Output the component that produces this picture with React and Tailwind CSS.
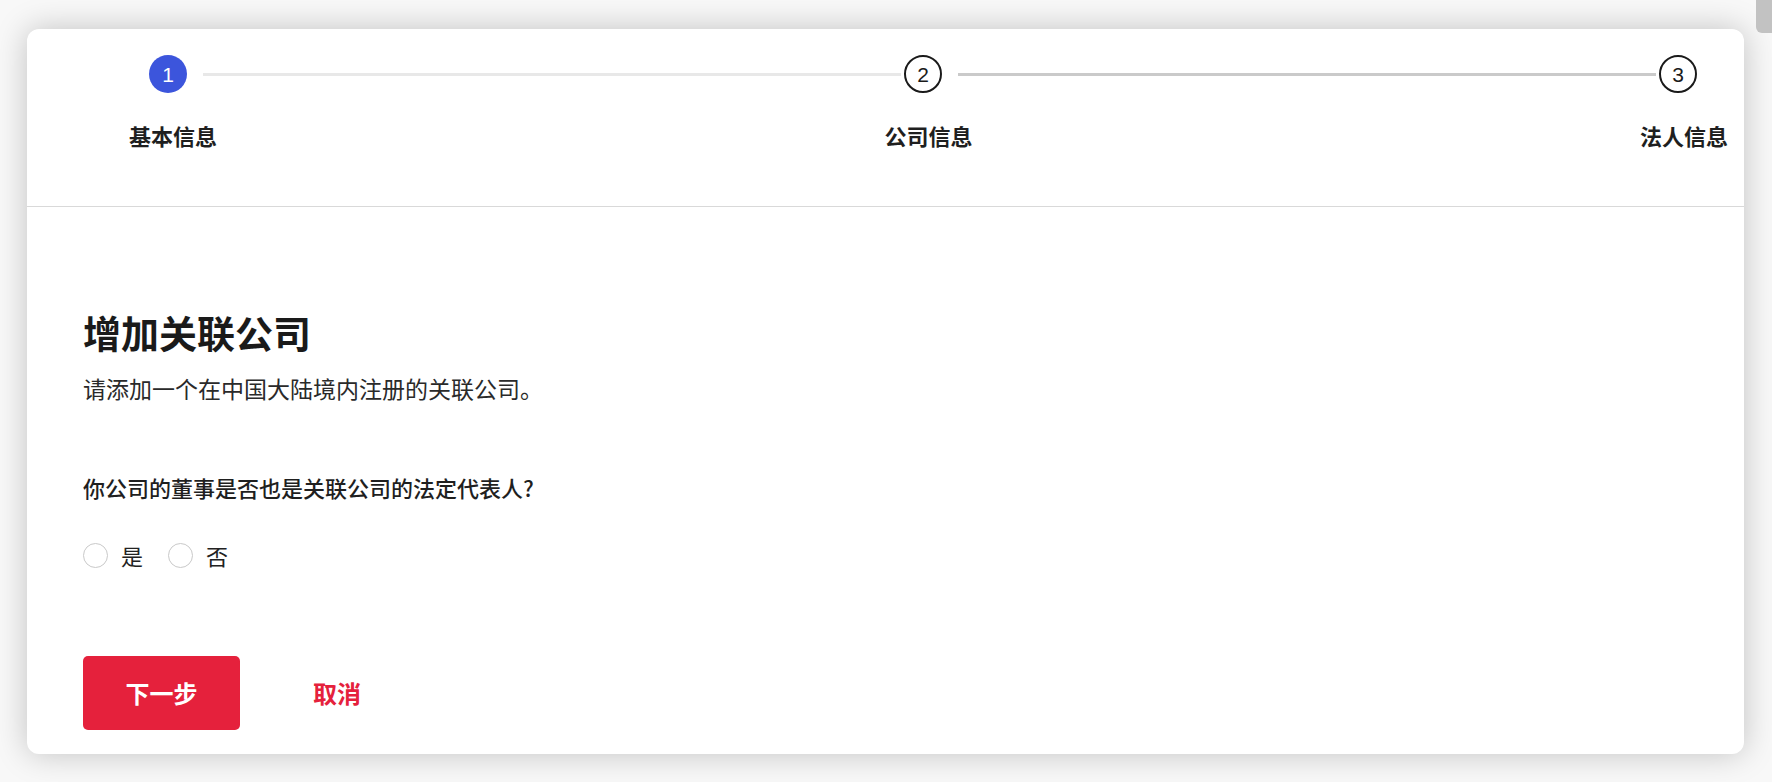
import React, { useState } from 'react';

const steps = [
  { id: 1, label: '基本信息' },
  { id: 2, label: '公司信息' },
  { id: 3, label: '法人信息' },
];

const StepCircle = ({ n, active }) => (
  <div
    className={`w-[38px] h-[38px] rounded-full flex items-center justify-center shrink-0 text-[21px] leading-none ${
      active ? 'bg-[#3c55dc] text-white' : 'border-[2.5px] border-[#1a1a1a] text-[#1a1a1a] bg-white'
    }`}
    style={{ fontFamily: '"Liberation Sans", Arial, sans-serif' }}
  >
    {n}
  </div>
);

const Radio = ({ label, checked, onClick }) => (
  <button onClick={onClick} className="flex items-center gap-[13px]">
    <span
      className={`w-[25px] h-[25px] rounded-full border-[1.5px] flex items-center justify-center ${
        checked ? 'border-[#e5213c]' : 'border-[#c9c9c9]'
      }`}
    >
      {checked && <span className="w-[12px] h-[12px] rounded-full bg-[#e5213c]" />}
    </span>
    <span className="text-[22px] leading-[30px] text-[#222]">{label}</span>
  </button>
);

export default function App() {
  const [answer, setAnswer] = useState(null);

  return (
    <div
      className="relative w-full h-[782px] overflow-hidden bg-[#f8f8f8] pl-[27px] pr-[28px] pt-[29px]"
      style={{ fontFamily: '"Noto Sans CJK SC", "Noto Sans", sans-serif' }}
    >
      {/* scrollbar thumb */}
      <div className="absolute top-0 right-0 w-[16px] h-[33px] bg-[#c2c2c2] rounded-bl-[6px]" />

      <div className="bg-white rounded-xl shadow-[0_0_32px_rgba(0,0,0,0.22)] overflow-hidden">
        {/* Stepper */}
        <div className="border-b border-[#d9d9d9] pb-[56px]">
          <div className="flex items-center pl-[122px] pr-[47px] pt-[26px]">
            <StepCircle n={1} active />
            <div className="flex-1 h-[3px] bg-[#e8e8e8] ml-4 mr-[3px]" />
            <StepCircle n={2} />
            <div className="flex-1 h-[3px] bg-[#cacaca] ml-4 mr-[3px]" />
            <StepCircle n={3} />
          </div>
          <div className="flex justify-between pl-[102px] pr-[16px] mt-[27px]">
            {steps.map((s) => (
              <span key={s.id} className="text-[22px] leading-[30px] font-semibold text-[#1f1f1f]">
                {s.label}
              </span>
            ))}
          </div>
        </div>

        {/* Form body */}
        <div className="pl-[56px] pt-[103px] pb-[24px]">
          <h1 className="text-[38px] leading-[44px] font-bold text-[#1a1a1a]">增加关联公司</h1>
          <p className="mt-[18px] text-[23px] leading-[32px] text-[#2a2a2a]">
            请添加一个在中国大陆境内注册的关联公司。
          </p>

          <p className="mt-[68px] text-[22px] leading-[30px] font-medium text-[#1f1f1f]">
            你公司的董事是否也是关联公司的法定代表人?
          </p>

          <div className="mt-[38px] flex items-center gap-[25px]">
            <Radio label="是" checked={answer === 'yes'} onClick={() => setAnswer('yes')} />
            <Radio label="否" checked={answer === 'no'} onClick={() => setAnswer('no')} />
          </div>

          <div className="mt-[86px] flex items-center gap-[73px]">
            <button className="w-[157px] h-[74px] rounded-[5px] bg-[#e5213c] text-white text-[24px] font-semibold">
              下一步
            </button>
            <button className="text-[24px] font-semibold text-[#e5213c]">取消</button>
          </div>
        </div>
      </div>
    </div>
  );
}
